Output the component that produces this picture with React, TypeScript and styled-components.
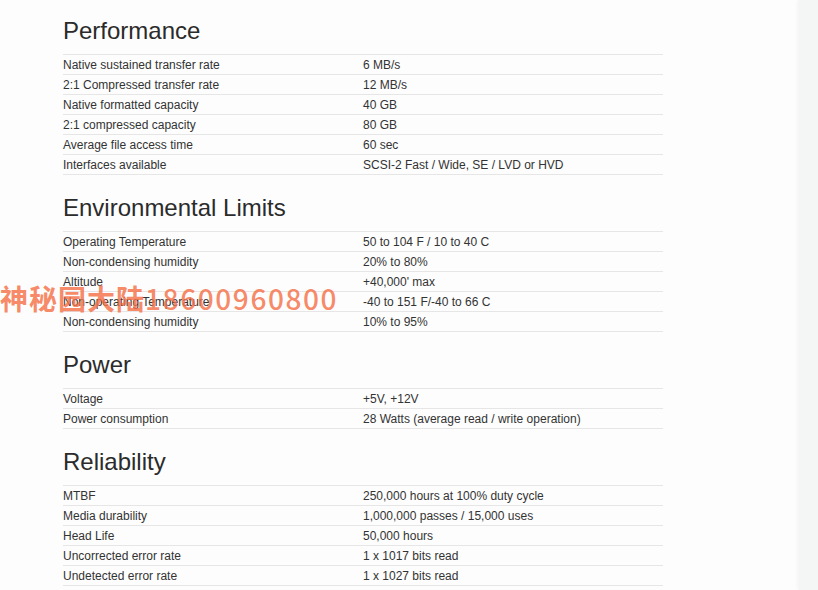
import React, { FC } from "react";
import styled, { createGlobalStyle } from "styled-components";

const GlobalStyle = createGlobalStyle`
  html, body {
    margin: 0;
    padding: 0;
    background: #fdfdfd;
  }
  body {
    font-family: "Liberation Sans", Arial, sans-serif;
    color: #333;
  }
`;

const Page = styled.div`
  position: relative;
  display: flex;
  width: 818px;
  height: 590px;
  overflow: hidden;
`;

const Main = styled.main`
  flex: 1;
  padding: 18px 0 0 63px;
`;

const Sidebar = styled.aside`
  width: 19px;
  background: #f4f5f5;
  box-shadow: -2px 0 3px rgba(0, 0, 0, 0.03);
`;

const Section = styled.section`
  width: 600px;
  & + & {
    margin-top: 20px;
  }
`;

const Heading = styled.h2`
  margin: 0 0 10px;
  font-size: 24px;
  line-height: 26px;
  font-weight: 400;
  color: #2b2b2b;
`;

const Table = styled.table`
  width: 100%;
  border-collapse: collapse;
  border-bottom: 1px solid #e6e6e6;
`;

const Cell = styled.td`
  width: 50%;
  padding: 2px 0 0;
  border-top: 1px solid #e6e6e6;
  font-size: 12px;
  line-height: 17px;
  color: #333;
  vertical-align: middle;
`;

const Watermark = styled.div`
  position: absolute;
  left: 0;
  top: 280px;
  font-family: "Noto Sans CJK SC", "Noto Sans", sans-serif;
  font-size: 28px;
  line-height: 36px;
  font-weight: 700;
  letter-spacing: 1px;
  color: rgba(245, 112, 72, 0.82);
  white-space: nowrap;
  pointer-events: none;
`;

const Digits = styled.span`
  font-weight: 500;
  letter-spacing: 1.6px;
`;

type Spec = { title: string; rows: [string, string][] };

const specs: Spec[] = [
  {
    title: "Performance",
    rows: [
      ["Native sustained transfer rate", "6 MB/s"],
      ["2:1 Compressed transfer rate", "12 MB/s"],
      ["Native formatted capacity", "40 GB"],
      ["2:1 compressed capacity", "80 GB"],
      ["Average file access time", "60 sec"],
      ["Interfaces available", "SCSI-2 Fast / Wide, SE / LVD or HVD"]
    ]
  },
  {
    title: "Environmental Limits",
    rows: [
      ["Operating Temperature", "50 to 104 F / 10 to 40 C"],
      ["Non-condensing humidity", "20% to 80%"],
      ["Altitude", "+40,000' max"],
      ["Non-operating Temperature", "-40 to 151 F/-40 to 66 C"],
      ["Non-condensing humidity", "10% to 95%"]
    ]
  },
  {
    title: "Power",
    rows: [
      ["Voltage", "+5V, +12V"],
      ["Power consumption", "28 Watts (average read / write operation)"]
    ]
  },
  {
    title: "Reliability",
    rows: [
      ["MTBF", "250,000 hours at 100% duty cycle"],
      ["Media durability", "1,000,000 passes / 15,000 uses"],
      ["Head Life", "50,000 hours"],
      ["Uncorrected error rate", "1 x 1017 bits read"],
      ["Undetected error rate", "1 x 1027 bits read"]
    ]
  }
];

const SpecSection: FC<{ spec: Spec }> = ({ spec }) => (
  <Section>
    <Heading>{spec.title}</Heading>
    <Table>
      <tbody>
        {spec.rows.map(([label, value], i) => (
          <tr key={i}>
            <Cell>{label}</Cell>
            <Cell>{value}</Cell>
          </tr>
        ))}
      </tbody>
    </Table>
  </Section>
);

const App: FC = () => (
  <Page>
    <GlobalStyle />
    <Main>
      {specs.map(spec => (
        <SpecSection key={spec.title} spec={spec} />
      ))}
    </Main>
    <Sidebar />
    <Watermark>
      神秘园大陆<Digits>18600960800</Digits>
    </Watermark>
  </Page>
);

export default App;
